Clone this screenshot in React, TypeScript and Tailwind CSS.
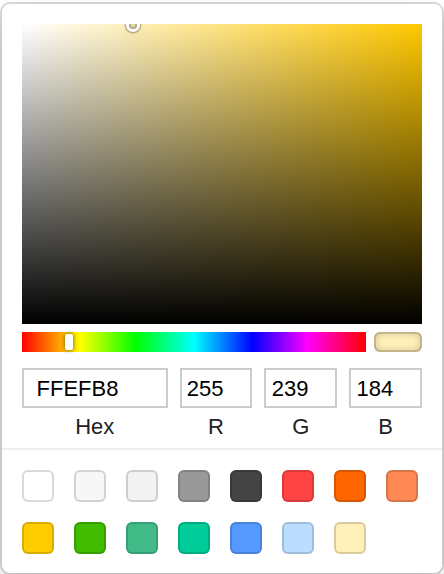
import React from 'react'

const hex = 'FFEFB8'
const rgb = { r: 255, g: 239, b: 184 }

// hsv of the active colour
const hue = 46.48
const sat = 1 - 184 / 255

const presets = [
  '#FFFFFF', '#F7F7F7', '#F2F2F2', '#999999', '#444444', '#FF4444', '#FF6600', '#FF8855',
  '#FFCC00', '#40BB00', '#40BB88', '#00CC99', '#5599FF', '#BBDDFF', '#FFEFB8',
]

const font = { fontFamily: '"Liberation Sans", Arial, sans-serif' }

function Field({ value, label, grow }: { value: string | number; label: string; grow: string }) {
  return (
    <div className={grow}>
      <input
        readOnly
        value={value}
        className="block w-full h-[40px] box-border px-[10%] pt-[1px] border-0 outline-none text-[22px] text-black bg-white shadow-[inset_0_0_0_2px_#ccc]"
        style={font}
      />
      <span className="block text-center text-[22px] leading-[24px] text-[#222] pt-[7px] pb-[9px]">{label}</span>
    </div>
  )
}

export default function App() {
  return (
    <div className="w-[444px] h-[574px] overflow-hidden bg-white" style={font}>
      <div className="ml-[2px] mt-[4px] w-[440px] bg-white rounded-[8px] shadow-[0_0_0_2px_rgba(0,0,0,0.15),0_16px_32px_rgba(0,0,0,0.15)]">
        <div className="px-[20px] pt-[20px]">
          {/* saturation */}
          <div className="relative h-[300px] overflow-hidden bg-[#ffc800]">
            <div className="absolute inset-0 bg-gradient-to-r from-white to-transparent" />
            <div className="absolute inset-0 bg-gradient-to-t from-black to-transparent" />
            <div
              className="absolute w-[8px] h-[8px] -ml-[4px] -mt-[3px] rounded-full shadow-[0_0_0_3px_#fff,inset_0_0_2px_2px_rgba(0,0,0,0.3),0_0_2px_4px_rgba(0,0,0,0.4)]"
              style={{ left: `${sat * 100}%`, top: 0 }}
            />
          </div>

          {/* hue + active colour */}
          <div className="flex gap-[8px] mt-[8px]">
            <div className="relative flex-1 h-[20px] px-[4px] bg-[linear-gradient(to_right,#f00_0%,#ff0_17%,#0f0_33%,#0ff_50%,#00f_67%,#f0f_83%,#f00_100%)]">
              <div className="relative h-full">
                <div
                  className="absolute top-[2px] w-[8px] h-[16px] -ml-[4px] rounded-[2px] bg-white shadow-[0_0_4px_rgba(0,0,0,0.6)]"
                  style={{ left: `${(hue / 360) * 100}%` }}
                />
              </div>
            </div>
            <div className="w-[48px] h-[20px] rounded-[6px] bg-[#FFEFB8] shadow-[inset_0_0_0_2px_rgba(0,0,0,0.15),inset_0_0_8px_rgba(0,0,0,0.25)]" />
          </div>

          {/* fields */}
          <div className="flex gap-[12px] mt-[16px]">
            <Field value={hex} label="Hex" grow="flex-[2]" />
            <Field value={rgb.r} label="R" grow="flex-1" />
            <Field value={rgb.g} label="G" grow="flex-1" />
            <Field value={rgb.b} label="B" grow="flex-1" />
          </div>
        </div>

        {/* presets */}
        <div className="border-t-2 border-[#eee] pt-[20px] pl-[20px] pb-[19px]">
          <div className="grid grid-cols-[repeat(8,32px)] gap-[20px]">
            {presets.map((c) => (
              <div
                key={c}
                className="w-[32px] h-[32px] rounded-[6px] shadow-[inset_0_0_0_2px_rgba(0,0,0,0.15)]"
                style={{ background: c }}
              />
            ))}
          </div>
        </div>
      </div>
    </div>
  )
}
